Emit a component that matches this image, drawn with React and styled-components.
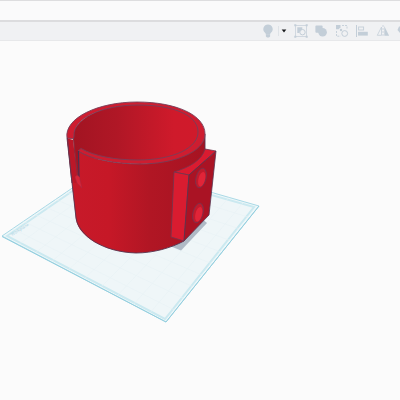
import React from 'react';
import styled, { createGlobalStyle } from 'styled-components';

const GlobalStyle = createGlobalStyle`
    * {
        box-sizing: border-box;
    }
    body {
        margin: 0;
        background-color: #fbfbfb;
        font-family: 'Open Sans', 'Liberation Sans', sans-serif;
    }
`;

const Page = styled.div`
    min-height: 100vh;
    display: flex;
    flex-direction: column;
    overflow: hidden;
`;

const Header = styled.header`
    height: 22px;
    background-color: #fafafb;
    border-top: 1px solid #dddddf;
    border-bottom: 2px solid #dcdcde;
`;

const Toolbar = styled.div`
    height: 19px;
    display: flex;
    align-items: center;
    justify-content: flex-end;
    background-color: #f0f1f3;
    border-bottom: 1px solid #e7e8ea;
`;

const Tools = styled.div`
    flex: none;
    width: 116px;
    margin-left: 6px;
    margin-right: -10px;
    display: flex;
    justify-content: space-between;
`;

const ToolButton = styled.button`
    flex: none;
    width: ${props => props.$width || 14}px;
    height: 14px;
    display: flex;
    align-items: center;
    justify-content: center;
    padding: 0;
    border: 0;
    background: none;
    color: ${props => props.$color || '#c3ced8'};
    cursor: pointer;
`;

const Divider = styled.span`
    width: 1px;
    height: 10px;
    margin-left: 3px;
    background-color: #dfe3e7;
`;

const Icon = styled.svg`
    flex: none;
    width: 14px;
    height: 14px;
    fill: none;
    stroke: currentColor;
`;

const Workspace = styled.main`
    flex: 1;
    background-color: #fbfbfb;
`;

const Scene = styled.svg`
    display: block;
    width: 100%;
    height: auto;
`;

const WorkplaneLabel = styled.text`
    font-size: 4px;
    fill: #9fcfdf;
`;

const BulbIcon = () => (
    <Icon viewBox="0 0 14 14">
        <path d="M7 .5a4.700 4.700 0 0 0-3 8.300c.7.600.9 1.100.9 1.900h4.200c0-.8.2-1.300.9-1.900A4.700 4.700 0 0 0 7 .5Z" fill="currentColor" stroke="none" />
        <path d="M4.900 10.500h4.200v1.900L8 13.500H6l-1.100-1.100Z" fill="currentColor" stroke="none" />
    </Icon>
);

const CaretIcon = () => (
    <Icon viewBox="0 0 14 14">
        <path d="M4.700 5.500h4.600L7 8.600Z" fill="currentColor" stroke="none" />
    </Icon>
);

const GroupIcon = () => (
    <Icon viewBox="0 0 14 14">
        <rect x="1.500" y="1.500" width="11" height="11" strokeWidth=".7" />
        <path d="M3.300 3.300h5v2.200A4 4 0 0 0 5.200 9H3.300Z" fill="currentColor" stroke="none" />
        <circle cx="8.500" cy="8.200" r="2.700" />
        <path d="M.3.3h2v2h-2ZM11.700.3h2v2h-2ZM.3 11.700h2v2h-2ZM11.700 11.700h2v2h-2Z" fill="currentColor" stroke="none" />
    </Icon>
);

const UnionIcon = () => (
    <Icon viewBox="0 0 14 14">
        <rect x="1.400" y="1.500" width="7.200" height="7.200" rx="1" fill="currentColor" stroke="none" />
        <circle cx="8.600" cy="8.300" r="4.300" fill="currentColor" stroke="none" />
    </Icon>
);

const UngroupIcon = () => (
    <Icon viewBox="0 0 14 14">
        <path d="M1 1h4.500v2.300L3.600 5.300H1Z" fill="currentColor" stroke="none" />
        <path d="M7 1.500h5v4M1.500 7v5.200h4" strokeWidth=".9" strokeDasharray="2 1" />
        <circle cx="6" cy="6" r="1.200" fill="currentColor" stroke="none" />
        <circle cx="9.700" cy="9.500" r="2.900" />
    </Icon>
);

const AlignIcon = () => (
    <Icon viewBox="0 0 14 14">
        <path d="M1.500 1v12" />
        <rect x="3.600" y="3" width="5" height="3" strokeWidth=".9" />
        <rect x="3" y="7.800" width="9.800" height="3.800" fill="currentColor" stroke="none" />
    </Icon>
);

const MirrorIcon = () => (
    <Icon viewBox="0 0 14 14">
        <path d="M7 1v12" strokeWidth=".8" strokeDasharray="2 1" />
        <path d="M5.500 3v8.300H1.300Z" strokeWidth=".8" />
        <path d="M8.300 2v9.700h4.800Z" fill="currentColor" stroke="none" />
    </Icon>
);

const CruiseIcon = () => (
    <Icon viewBox="0 0 14 14">
        <path d="M3 2.500h7v3H6v2l4 4H6L1.500 6Z" fill="currentColor" stroke="none" />
    </Icon>
);

const tools = [
    { label: 'Show all', icon: <GroupIcon /> },
    { label: 'Group', icon: <UnionIcon /> },
    { label: 'Ungroup', icon: <UngroupIcon /> },
    { label: 'Align', icon: <AlignIcon /> },
    { label: 'Mirror', icon: <MirrorIcon /> },
    { label: 'Cruise', icon: <CruiseIcon /> }
];

// workplane corners: left, back, right, front
const corners = [[2, 236], [109, 163], [259, 206], [166, 322]];

const mix = (a, b, t) => [a[0] + (b[0] - a[0]) * t, a[1] + (b[1] - a[1]) * t];

const Workplane = () => {
    const [left, back, right, front] = corners;
    const steps = [0.1, 0.2, 0.3, 0.4, 0.5, 0.6, 0.7, 0.8, 0.9];
    const lines = steps.flatMap(t => [
        [mix(left, back, t), mix(front, right, t)],
        [mix(left, front, t), mix(back, right, t)]
    ]);
    return (
        <g>
            <polygon points={corners.join(' ')} fill="#eef7f9" stroke="#a9d9e6" strokeWidth="1" />
            <polygon points="7,236 109,166 254,207 165,319" fill="#eff6f8" stroke="#cbe9f0" strokeWidth="2" />
            {lines.map(([a, b]) => (
                <line key={`${a}-${b}`} x1={a[0]} y1={a[1]} x2={b[0]} y2={b[1]} stroke="#e8f2f5" strokeWidth=".6" />
            ))}
            <path d="M2 236.500L166 322L259 206" fill="none" stroke="#94cfdf" strokeWidth="1" />
            <WorkplaneLabel transform="translate(12 236) rotate(-32)">Workplane</WorkplaneLabel>
        </g>
    );
};

const Clamp = () => (
    <g strokeLinejoin="round">
        <path d="M170 246L181 250.500L207 223L200 217Z" fill="#afbac6" />
        {/* inside of the ring, down to the foot of the slot */}
        <path d="M73 138C72 119 103 104 138 104C174 104 199 115 199 132C199 149 173 161 138 161L82 158V180H76Z" fill="url(#inner)" />
        {/* outer wall */}
        <path
            d="M67 138L73 143L77 178L79 178L78 151C91 159 114 164 140 164C175 162 204 151 205 134L205 210L184 241C171 248 153 253 136 253C103 252 79 236 76 220Z"
            fill="url(#outer)"
        />
        <path
            d="M67 138L71 174L76 218C79 236 103 252 136 253C153 253 171 248 184 241M205 134V150"
            fill="none"
            stroke="#573650"
            strokeWidth=".9"
        />
        {/* rim, open at the slot */}
        <path
            d="M67 138C64 118 98 102 137 102C176 102 205 115 205 134C205 152 174 164 140 164C114 164 91 159 78 151L81 148.500C94 156 115 160 138 160C173 160 199 148 198 131C197 114 171 105 138 105C103 105 73 118 74 136L73.500 139Z"
            fill="#ce1d30"
            stroke="#75405a"
            strokeWidth=".9"
        />
        <path d="M67 138L73 140L77 176L79 183L74 183L71 173Z" fill="#bb1728" />
        <path d="M67.500 138L71 174L72 183" fill="none" stroke="#623650" strokeWidth=".9" />
        <path d="M73.500 139L77.500 176" fill="none" stroke="#813448" strokeWidth=".8" />
        <path d="M78.500 151L79 177" fill="none" stroke="#493152" strokeWidth="1.200" />
        <path d="M75 177C77 174 80 176 80 180L82 188L77 183Z" fill="#d72538" stroke="#a92942" strokeWidth=".5" />
        {/* mounting block */}
        <path d="M174 172C190 167 202 160 205 149L216 151L189 175Z" fill="#da1b30" stroke="#703751" strokeWidth=".8" />
        <path d="M174 172L189 175L184 241L171 237Z" fill="#d91c30" stroke="#703751" strokeWidth=".8" />
        <path d="M189 175L216 151L209 215L184 241Z" fill="#aa1324" stroke="#573650" strokeWidth=".8" />
        {[[201, 178], [198, 213]].map(([x, y]) => (
            <g key={y} transform={`translate(${x} ${y}) rotate(14)`}>
                <ellipse rx="5" ry="10" fill="#c01a2c" stroke="#743550" strokeWidth=".8" />
                <ellipse cx="1" cy="1" rx="3.300" ry="7.500" fill="#e12438" />
            </g>
        ))}
    </g>
);

const App = () => (
    <Page>
        <GlobalStyle />
        <Header />
        <Toolbar>
            <ToolButton aria-label="Visibility">
                <BulbIcon />
            </ToolButton>
            <Divider />
            <ToolButton aria-label="Visibility options" $width={9} $color="#17191c">
                <CaretIcon />
            </ToolButton>
            <Tools>
                {tools.map(tool => (
                    <ToolButton key={tool.label} aria-label={tool.label}>
                        {tool.icon}
                    </ToolButton>
                ))}
            </Tools>
        </Toolbar>
        <Workspace>
            <Scene viewBox="0 41 400 359">
                <defs>
                    <linearGradient id="inner">
                        <stop offset="0" stopColor="#a21422" />
                        <stop offset=".35" stopColor="#b01726" />
                        <stop offset=".8" stopColor="#cf1a2b" />
                        <stop offset="1" stopColor="#d01a2b" />
                    </linearGradient>
                    <linearGradient id="outer">
                        <stop offset="0" stopColor="#c71a2a" />
                        <stop offset=".3" stopColor="#c61827" />
                        <stop offset=".6" stopColor="#b11624" />
                        <stop offset="1" stopColor="#a61322" />
                    </linearGradient>
                </defs>
                <Workplane />
                <Clamp />
            </Scene>
        </Workspace>
    </Page>
);

export default App;
